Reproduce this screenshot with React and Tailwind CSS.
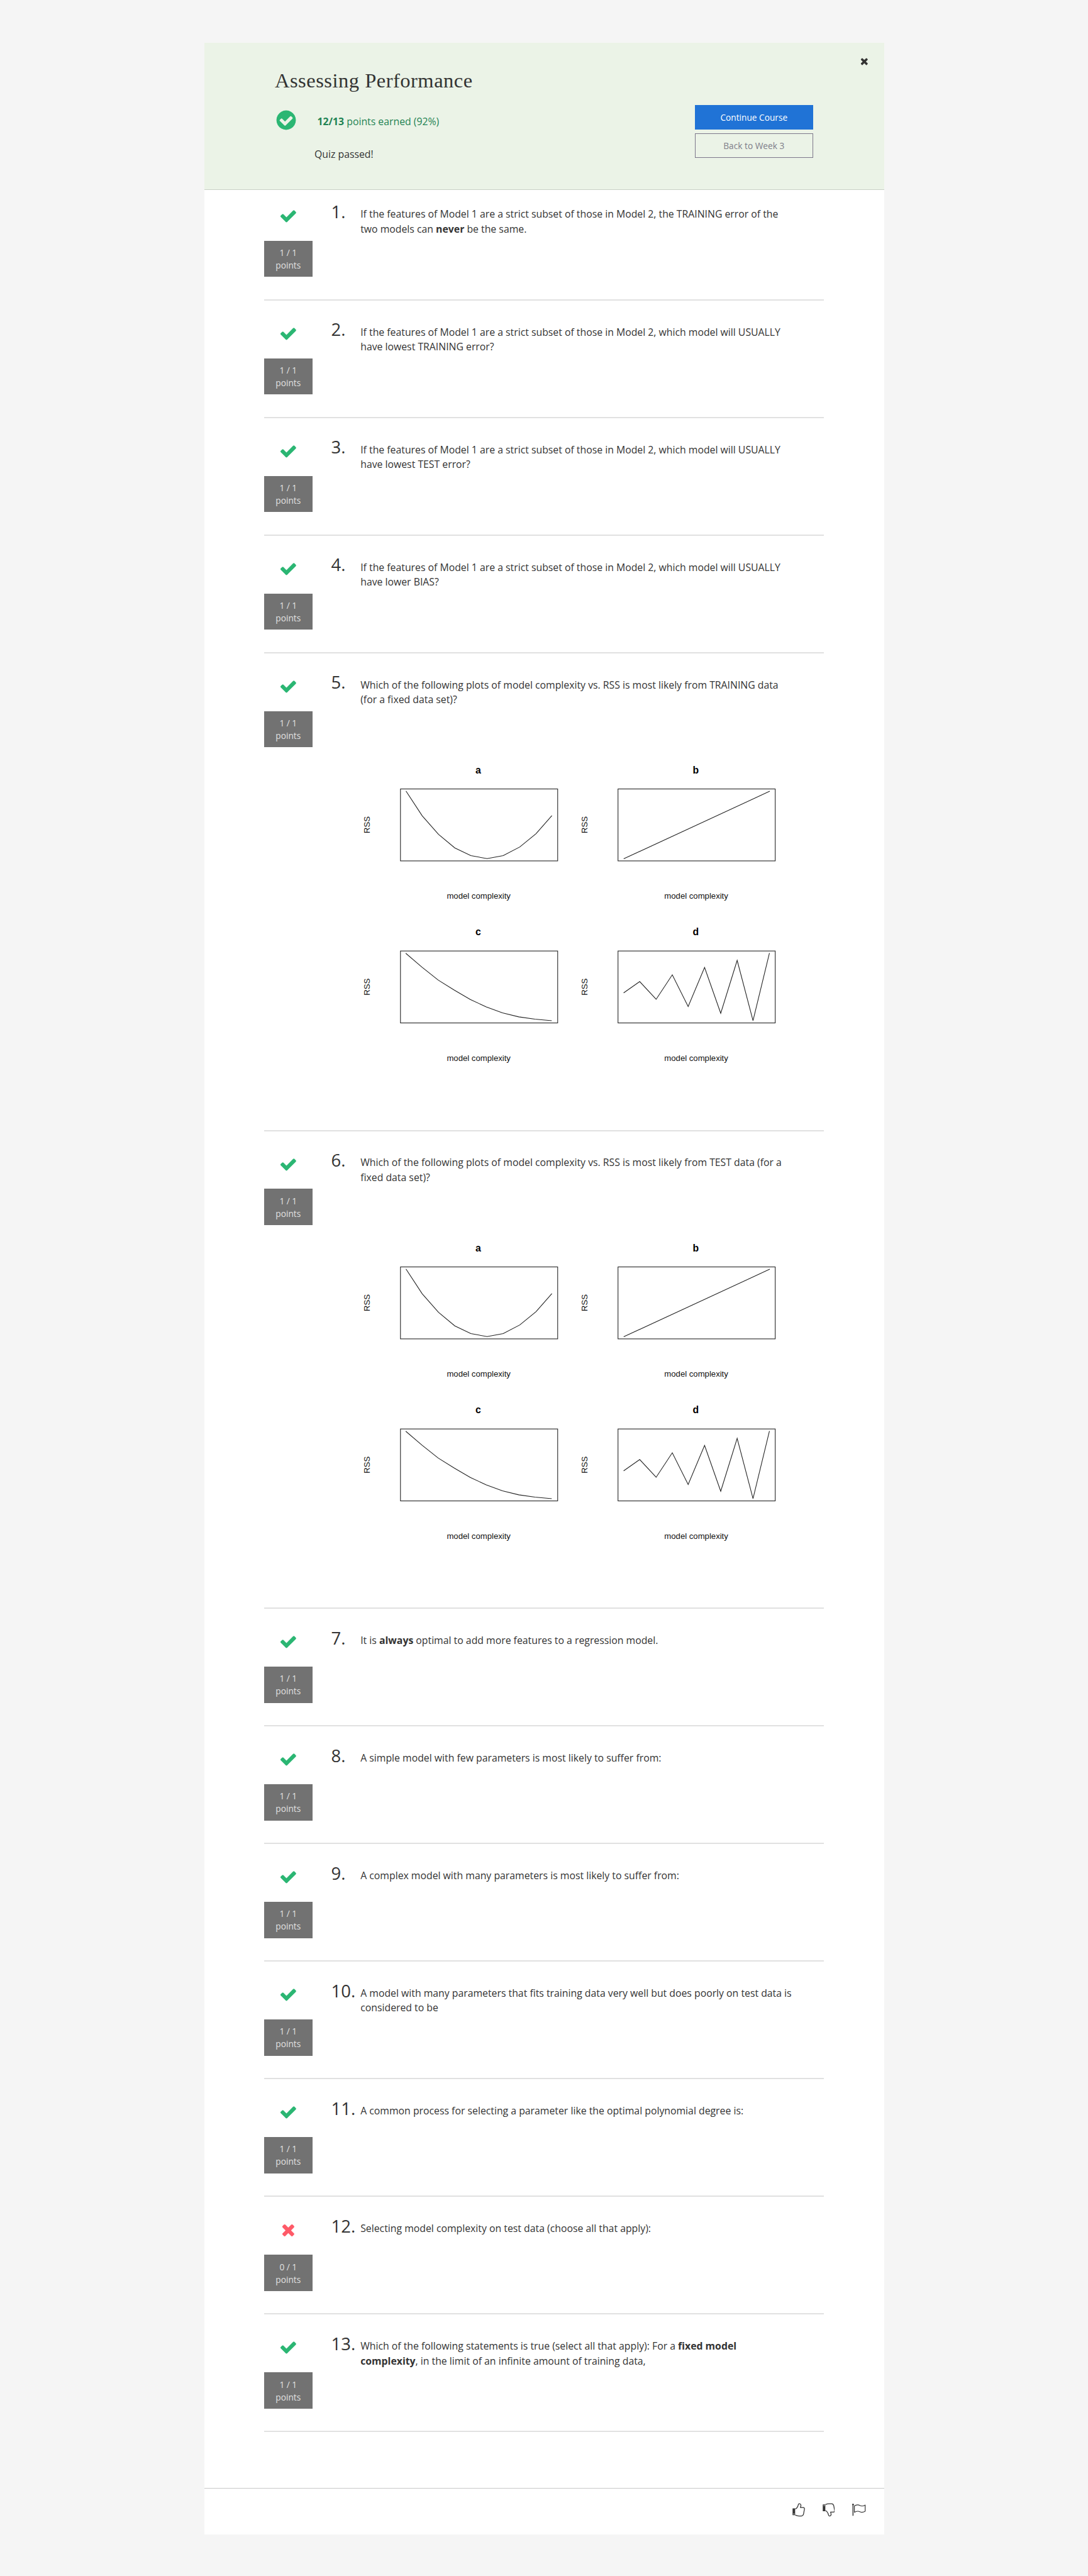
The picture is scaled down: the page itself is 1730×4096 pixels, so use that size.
import React from "react";

const CHECK = "M1671 566q0 40-28 68l-724 724-136 136q-28 28-68 28t-68-28l-136-136-362-362q-28-28-28-68t28-68l136-136q28-28 68-28t68 28l294 295 656-657q28-28 68-28t68 28l136 136q28 28 28 68z";
const TIMES = "M1490 1322q0 40-28 68l-136 136q-28 28-68 28t-68-28l-294-294-294 294q-28 28-68 28t-68-28l-136-136q-28-28-28-68t28-68l294-294-294-294q-28-28-28-68t28-68l136-136q28-28 68-28t68 28l294 294 294-294q28-28 68-28t68 28l136 136q28 28 28 68t-28 68l-294 294 294 294q28 28 28 68z";
const CIRCLE = "M1412 734q0-28-18-46l-91-90q-19-19-45-19t-45 19l-408 407-226-226q-19-19-45-19t-45 19l-91 90q-18 18-18 46 0 27 18 45l362 362q19 19 45 19 27 0 46-19l543-543q18-18 18-45zm252 162q0 209-103 385.5t-279.5 279.5-385.5 103-385.5-103-279.5-279.5-103-385.5 103-385.5 279.5-279.5 385.5-103 385.5 103 279.5 279.5 103 385.5z";

function Glyph({ d, className }) {
  return (
    <svg viewBox="0 0 1792 1792" fill="currentColor" className={className}>
      <path d={d} />
    </svg>
  );
}

const PLOTS = [
  { name: "a", x: 0, y: 0, pts: "80.4,76.3 109,120 137.8,152.7 166.6,176.7 195,190.3 223.6,195.7 252,190.3 281.5,175 310,151.7 338,119.7" },
  { name: "b", x: 384, y: 0, pts: "80.7,196 338.6,76.7" },
  { name: "c", x: 0, y: 286, pts: "80,76.7 108.7,101.3 137.3,124 166,142 194,158.3 222,171.3 250.7,182 279.5,189 308,193 337.7,195.7" },
  { name: "d", x: 384, y: 286, pts: "80.6,146.7 109,126.7 138,158 166.5,114.7 194.5,170.7 223.5,101.7 252,182.7 281,89.3 309,195.7 338,76.3" },
];

function Plots() {
  return (
    <svg viewBox="0 0 768 600" className="block h-[540.5px] w-[692px]" fontFamily='"Liberation Sans", Arial, sans-serif'>
      {PLOTS.map((p) => (
        <g key={p.name} transform={`translate(${p.x} ${p.y})`}>
          <text x="208" y="45.3" textAnchor="middle" fontSize="17.5" fontWeight="700" fill="#000">{p.name}</text>
          <rect x="70.7" y="72.7" width="277.5" height="127" fill="none" stroke="#222" strokeWidth="1.2" />
          <polyline points={p.pts} fill="none" stroke="#222" strokeWidth="1.2" />
          <text x="208.8" y="266.5" textAnchor="middle" fontSize="14.6" fill="#111">model complexity</text>
          <text transform="translate(16.5 136) rotate(-90)" textAnchor="middle" fontSize="14.6" fill="#111">RSS</text>
        </g>
      ))}
    </svg>
  );
}

const QUESTIONS = [
  { text: <>If the features of Model 1 are a strict subset of those in Model 2, the TRAINING error of the<br />two models can <b>never</b> be the same.</> },
  { text: <>If the features of Model 1 are a strict subset of those in Model 2, which model will USUALLY<br />have lowest TRAINING error?</> },
  { text: <>If the features of Model 1 are a strict subset of those in Model 2, which model will USUALLY<br />have lowest TEST error?</> },
  { text: <>If the features of Model 1 are a strict subset of those in Model 2, which model will USUALLY<br />have lower BIAS?</> },
  { plots: true, text: <>Which of the following plots of model complexity vs. RSS is most likely from TRAINING data<br />(for a fixed data set)?</> },
  { plots: true, text: <>Which of the following plots of model complexity vs. RSS is most likely from TEST data (for a<br />fixed data set)?</> },
  { text: <>It is <b>always</b> optimal to add more features to a regression model.</> },
  { text: <>A simple model with few parameters is most likely to suffer from:</> },
  { text: <>A complex model with many parameters is most likely to suffer from:</> },
  { text: <>A model with many parameters that fits training data very well but does poorly on test data is<br />considered to be</> },
  { text: <>A common process for selecting a parameter like the optimal polynomial degree is:</> },
  { wrong: true, text: <>Selecting model complexity on test data (choose all that apply):</> },
  { text: <>Which of the following statements is true (select all that apply): For a <b>fixed model<br />complexity</b>, in the limit of an infinite amount of training data,</> },
];

function Question({ n, text, plots, wrong }) {
  return (
    <section className={`flex shrink-0 border-b-2 border-[#e1e1e1] ${plots ? "h-[759.6px]" : "h-[187.06px]"}`}>
      <div className="flex w-[76.6px] shrink-0 flex-col items-center pt-[38px]">
        <Glyph d={wrong ? TIMES : CHECK} className={`size-[28.8px] ${wrong ? "text-[#ff5a68]" : "text-[#2bb673]"}`} />
        <div className="mt-[25px] flex h-[57.7px] w-full flex-col items-center justify-center bg-[#727272] pt-px text-[13.7px] leading-[20px] text-[#e1e1e1]">
          <span>{wrong ? "0 / 1" : "1 / 1"}</span>
          <span>points</span>
        </div>
      </div>
      <div className="w-[76.6px] shrink-0 pt-[26.5px] pl-[30px] text-[27.5px] leading-[40px] whitespace-nowrap">{n}.</div>
      <div className="min-w-0 flex-1 whitespace-nowrap">
        <p className="pt-[38.7px] text-[15.8px] leading-[23.4px]">{text}</p>
        {plots && <div className="mt-[64.8px]"><Plots /></div>}
      </div>
    </section>
  );
}

export default function App() {
  return (
    <div className="h-[4096px] w-[1730px] overflow-hidden bg-[#f5f5f5] pt-[67.6px] font-['Open_Sans',sans-serif] text-[#333]">
      <main className="mx-auto flex h-[3962px] w-[1081px] flex-col bg-white">
        <header className="flex h-[234.2px] shrink-0 border-b border-[#c9d0c6] bg-[#ebf3e7]">
          <div className="flex-1 pl-[112.5px] pt-[40px]">
            <h1 className="font-['Liberation_Serif',serif] text-[32.5px] leading-[40px] tracking-[0.5px] whitespace-nowrap">Assessing Performance</h1>
            <div className="mt-[25px] flex items-center">
              <Glyph d={CIRCLE} className="size-[36px] text-[#2bb673]" />
              <p className="ml-[31.5px] mt-[5px] text-[15.8px] leading-[24px] text-[#1f8354]"><b>12/13</b> points earned (92%)</p>
            </div>
            <p className="mt-[24px] ml-[63px] text-[15.8px] leading-[24px]">Quiz passed!</p>
          </div>
          <div className="flex w-[188.3px] flex-col gap-[5.4px] pt-[99px]">
            <button className="h-[39.6px] bg-[#2073d6] pt-px text-[13.7px] text-white">Continue Course</button>
            <button className="h-[39.6px] border border-[#7d778a] pt-px text-[13.7px] text-[#7d7d89]">Back to Week 3</button>
          </div>
          <div className="w-[112.6px] pl-[73.5px] pt-[21.5px]">
            <Glyph d={TIMES} className="size-[16.6px] text-[#333]" />
          </div>
        </header>
        <div className="-mt-[11px] flex flex-col pr-[95.3px] pl-[95.5px]">
          {QUESTIONS.map((q, i) => <Question key={i} n={i + 1} {...q} />)}
        </div>
        <footer className="mt-auto flex h-[73.4px] shrink-0 items-start justify-end gap-[28px] border-t border-[#c8c8c8] pr-[28.5px] pt-[23px]">
          <svg viewBox="0 0 22 24" className="h-[21.6px] w-[19.8px]" fill="none" stroke="#333" strokeWidth="1.4" strokeLinejoin="round">
            <path fillRule="evenodd" fill="#333" stroke="none" d="M.3 9.5h4.5v12h-4.5zM2 18.6v1.4h1.4v-1.4z" />
            <path d="M5 10.5q2.5-.5 4.5-4.5l1.2-4q.6-1 2-.8 2.8.5 2.3 3.5l-.9 3.3h5.4q2 .3 1.8 2.3l-1.6 9q-.8 3.2-3.7 3.5h-4q-3 .2-7-1.5" />
          </svg>
          <svg viewBox="0 0 22 24" className="h-[21.6px] w-[19.8px]" fill="none" stroke="#333" strokeWidth="1.4" strokeLinejoin="round">
            <path fillRule="evenodd" fill="#333" stroke="none" d="M.3 2.5h4.5v12h-4.5zM2 4v1.4h1.4v-1.4z" />
            <path d="M5 13.500q2.5.5 4.5 4.5l1.2 4q.6 1 2 .8 2.8-.5 2.3-3.500l-.9-3.300h5.400q2-.3 1.800-2.300l-1.600-9q-.8-3.200-3.700-3.500h-4q-3-.2-7 1.500" />
          </svg>
          <svg viewBox="0 0 24 24" className="size-[21.6px]" fill="none" stroke="#333" strokeWidth="1.3" strokeLinejoin="round">
            <circle cx="1.5" cy="2.5" r="1.5" fill="#333" stroke="none" />
            <path d="M1.5 2.5v20" strokeWidth="1.6" />
            <path d="M4 5q5-3.5 10-.5 4 2 9-1v11q-5 3-9 1-5-2.5-10 .8z" />
          </svg>
        </footer>
      </main>
    </div>
  );
}
